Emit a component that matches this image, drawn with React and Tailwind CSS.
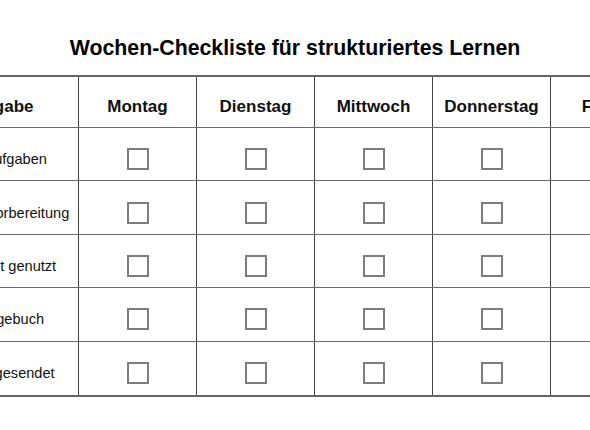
import React from "react";

const days = ["Montag", "Dienstag", "Mittwoch", "Donnerstag", "Freitag"];

const tasks = [
  "Hausaufgaben",
  "Prüfungsvorbereitung",
  "Pufferzeit genutzt",
  "Lerntagebuch",
  "Fragen gesendet",
];

const Checkbox = () => (
  <span className="block w-[22px] h-[22px] border-2 border-[#7d7d7d] bg-white"></span>
);

export default function App() {
  return (
    <div className="w-full min-h-[430px] bg-white overflow-hidden text-[#111] font-['Liberation_Sans',Arial,sans-serif]">
      {/* Title */}
      <h1 className="pt-[36px] text-center text-[21.3px] leading-[24px] font-bold text-black">
        Wochen-Checkliste für strukturiertes Lernen
      </h1>

      {/* Table, wider than the page and centered */}
      <div className="flex justify-center mt-[15px]">
        <div className="flex-none w-[748px] flex flex-col border-y-2 border-[#666] divide-y divide-[#6a6a6a]">
          <div className="grid grid-cols-[158px_repeat(5,118px)] h-[51px] divide-x divide-[#444]">
            <div className="flex items-center justify-center pt-[10px] text-[17px] leading-[20px] font-bold">
              Aufgabe
            </div>
            {days.map((d) => (
              <div
                key={d}
                className="flex items-center justify-center pt-[10px] text-[17px] leading-[20px] font-bold"
              >
                {d}
              </div>
            ))}
          </div>

          {tasks.map((t) => (
            <div
              key={t}
              className="grid grid-cols-[158px_repeat(5,118px)] h-[53.4px] divide-x divide-[#444]"
            >
              <div className="flex items-center justify-center pt-[10px] text-[14.6px] leading-[20px] whitespace-nowrap">
                {t}
              </div>
              {days.map((d) => (
                <div key={d} className="flex items-center justify-center pt-[10px]">
                  <Checkbox />
                </div>
              ))}
            </div>
          ))}
        </div>
      </div>
    </div>
  );
}
